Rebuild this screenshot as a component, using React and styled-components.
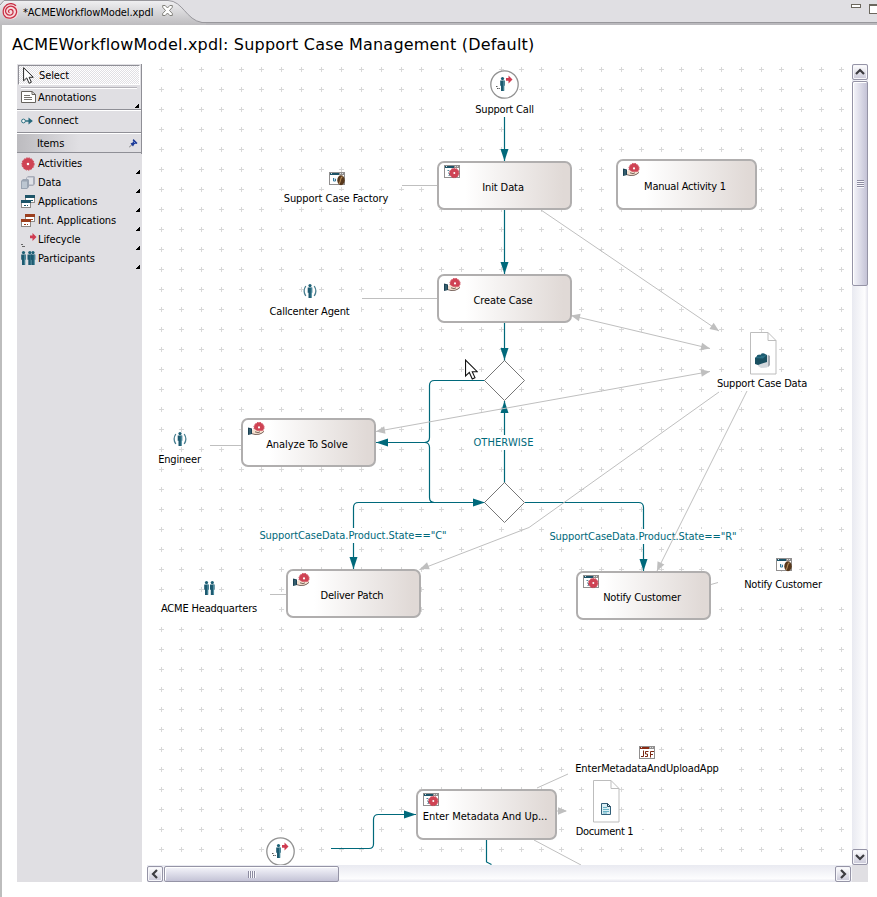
import React from "react";
import styled, { createGlobalStyle } from "styled-components";

const TEAL = "#00697b";
const GRAY = "#bfbfbf";
const CHROME = "#e0dfe3";
/* Canvas coordinates are given in window space; the viewport starts here. */
const OX = 142;
const OY = 64;

const Global = createGlobalStyle`
  * { box-sizing: border-box; }
  body { margin: 0; background: #fff; overflow: hidden; }
`;

const Window = styled.div`
  width: 877px;
  height: 897px;
  display: flex;
  flex-direction: column;
  overflow: hidden;
  background: #fff;
  color: #000;
  font: 11px/15px "DejaVu Sans Condensed", "DejaVu Sans", sans-serif;
  font-stretch: condensed;
  letter-spacing: -0.1px;
  white-space: nowrap;
`;

const TabBar = styled.header`
  height: 25px;
  flex: none;
  display: flex;
  justify-content: space-between;
  background: ${CHROME};
  border-bottom: 2px solid #bab9bd;
  box-shadow: inset 0 -1px #98979c;
`;

const Tab = styled.div`
  position: relative;
  width: 206px;
  height: 25px;
  display: flex;
  align-items: flex-start;
  padding: 3px 0 0 2px;
`;

const TabShape = styled.svg`
  position: absolute;
  left: 0;
  top: 0;
`;

const TabContent = styled.div`
  position: relative;
  display: flex;
  align-items: center;
  height: 17px;
`;

const TabName = styled.span`
  width: 131px;
  margin: 1px 8px 0 4px;
`;

const TabClose = styled.div`
  height: 13px;
  line-height: 0;
`;

const WindowButtons = styled.div`
  display: flex;
  padding: 4px 0 0;
  gap: 8px;
  width: 26px;
`;

const Minimize = styled.div`
  width: 10px;
  height: 4px;
  flex: none;
  border: 1px solid #6b675e;
  background: #fff;
`;

const Maximize = styled.div`
  width: 10px;
  height: 10px;
  flex: none;
  border: 1px solid #6b675e;
  border-top-width: 2px;
  background: #fff;
`;

const Body = styled.main`
  flex: 1;
  display: flex;
  flex-direction: column;
  border-left: 2px solid #bdbdbd;
`;

const Title = styled.h1`
  height: 39px;
  margin: 0;
  padding: 10px 0 0 10px;
  font: 400 16px/20px "DejaVu Sans", sans-serif;
  font-stretch: normal;
  letter-spacing: 0.2px;
`;

const Workspace = styled.div`
  display: flex;
  height: 818px;
  padding-left: 15px;
`;

const Palette = styled.nav`
  width: 125px;
  height: 818px;
  flex: none;
  background: ${CHROME};
`;

const PaletteTop = styled.div`
  border-right: 1px solid #8f8f96;
  height: 90px;
`;

const SelectTool = styled.div`
  height: 20px;
  margin: 0 1px 2px 1px;
  display: flex;
  align-items: center;
  padding: 0 0 0 4px;
  gap: 5px;
  border: 1px solid;
  border-color: #8f8f96 #fff #fff #8f8f96;
  background: repeating-conic-gradient(#fff 0 25%, ${CHROME} 0 50%) 0 0 / 2px 2px;
`;

const SelectWrap = styled.div`
  height: 24px;
  padding-top: 1px;
`;

const Rule = styled.div`
  height: 2px;
  margin: 0 4px;
  border-top: 1px solid #b5b4ba;
  background: #fff;
`;

const Tool = styled.div`
  position: relative;
  height: ${(p) => p.$h}px;
  display: flex;
  align-items: center;
  padding: 0 0 ${(p) => p.$pb || 0}px 4px;
  gap: 3px;
  border-bottom: ${(p) => (p.$line ? "1px solid #8f8f96" : "0")};
  box-shadow: ${(p) => (p.$light ? "inset 0 1px #fff" : "none")};
`;

const ToolIcon = styled.div`
  width: 14px;
  flex: none;
  line-height: 0;
  overflow: visible;
`;

const ItemsHeader = styled.div`
  height: 20px;
  display: flex;
  align-items: center;
  justify-content: space-between;
  padding: 0 3px 0 20px;
  border-top: 1px solid #fff;
  border-bottom: 1px solid #8f8f96;
  background: linear-gradient(90deg, #bcbbbf, ${CHROME} 50%);
`;

const Corner = styled.i`
  position: absolute;
  right: 2px;
  bottom: ${(p) => p.$b}px;
  width: 4px;
  height: 4px;
  background: linear-gradient(135deg, transparent 45%, #000 46%);
`;

const Text = styled.span`
  letter-spacing: ${(p) => p.$ls ?? -0.1}px;
`;

const EditorGrid = styled.div`
  display: grid;
  grid-template-columns: 710px 16px;
  grid-template-rows: 801px 17px;
`;

const Canvas = styled.section`
  position: relative;
  overflow: hidden;
  background: #fff;
`;

const Layer = styled.svg`
  position: absolute;
  left: 0;
  top: 0;
`;

const ActivityBox = styled.div`
  position: absolute;
  left: ${(p) => p.$x - OX}px;
  top: ${(p) => p.$y - OY}px;
  width: ${(p) => p.$w}px;
  height: ${(p) => p.$h}px;
  display: flex;
  align-items: center;
  justify-content: center;
  padding: 4px 3px 0 0;
  border: 2px solid #b0aeae;
  border-radius: 7px;
  background: linear-gradient(90deg, #fff 20%, #e0d9d6 95%);
`;

const ActivityIcon = styled.div`
  position: absolute;
  left: 5px;
  top: 2px;
  line-height: 0;
`;

const Caption = styled.div`
  position: absolute;
  left: ${(p) => p.$x - OX}px;
  top: ${(p) => p.$y - OY}px;
  width: ${(p) => p.$w}px;
  height: 15px;
  text-align: center;
  background: #fff;
  color: ${(p) => (p.$flow ? TEAL : "#000")};
  letter-spacing: ${(p) => p.$ls ?? -0.18}px;
`;

const Pin = styled.div`
  position: absolute;
  left: ${(p) => p.$x - OX}px;
  top: ${(p) => p.$y - OY}px;
  line-height: 0;
`;

const VScroll = styled.div`
  display: flex;
  flex-direction: column;
  background: linear-gradient(90deg, #e9eaf1, #fdfdfe 80%, #e3e3ec);
`;

const HScroll = styled.div`
  display: flex;
  margin-left: 5px;
  background: linear-gradient(#e9eaf1, #fdfdfe 80%, #e3e3ec);
`;

const ScrollCorner = styled.div`
  background: ${CHROME};
`;

const ScrollButton = styled.div`
  width: 16px;
  height: 16px;
  flex: none;
  margin: ${(p) => p.$m || "0"};
  display: flex;
  align-items: center;
  justify-content: center;
  border: 1px solid #9594a6;
  border-radius: 2px;
  box-shadow: inset 0 0 0 1px #f6f6fa;
  background: linear-gradient(#fff, #c9c8d8);
`;

const Thumb = styled.div`
  flex: none;
  width: ${(p) => p.$w}px;
  height: ${(p) => p.$h}px;
  margin: ${(p) => p.$m};
  display: flex;
  align-items: center;
  justify-content: center;
  border: 1px solid #9594a6;
  border-radius: 2px;
  box-shadow: inset 1px 1px #fff;
  background: linear-gradient(${(p) => p.$dir}, #f5f5fa, #e4e4ee 35%, #c4c3d6);
`;

const Grip = styled.div`
  width: ${(p) => (p.$vertical ? 7 : 8)}px;
  height: ${(p) => (p.$vertical ? 8 : 7)}px;
  background: repeating-linear-gradient(
    ${(p) => (p.$vertical ? "180deg" : "90deg")},
    #8c8ba0 0 1px,
    #f8f8fc 1px 2px
  );
`;

/* ---- icons ---- */
const Svg = ({ w = 16, h = 16, children, ...rest }) => (
  <svg width={w} height={h} viewBox={`0 0 ${w} ${h}`} {...rest}>
    {children}
  </svg>
);

const GearShape = ({ cx, cy, r }) => (
  <g>
    <circle cx={cx} cy={cy} r={r - 0.4} fill="#cf4354" />
    <circle cx={cx} cy={cy} r={r - 0.3} fill="none" stroke="#cb3f50" strokeWidth="1" strokeDasharray="1.6 1" />
    <circle cx={cx} cy={cy} r={r * 0.2} fill="#fff" />
  </g>
);

const GearIcon = () => (
  <Svg h={14} w={14}><GearShape cx={7} cy={7} r={6.4} /></Svg>
);

const WindowArt = ({ color = "#1d5468" }) => (
  <g shapeRendering="crispEdges">
    <rect x="0" y="0" width="16" height="13" fill="#918f8f" />
    <rect x="1" y="3" width="14" height="9" fill="#fff" />
    <rect x="1" y="1" width="9" height="2" fill={color} />
    <rect x="11" y="1" width="1" height="1" fill="#ddd" />
    <rect x="13" y="1" width="1" height="1" fill="#ddd" />
    <rect x="2" y="1" width="1" height="1" fill="#d4e1e6" />
  </g>
);

const AppGearIcon = () => (
  <Svg h={14}>
    <WindowArt />
    <path d="M3.500 5.500h1.500l1 1M4 8h1.500v2.500h-1" stroke="#4f8397" fill="none" />
    <GearShape cx={10.3} cy={8} r={5} />
  </Svg>
);

const AppBeanIcon = () => (
  <Svg h={14}>
    <WindowArt />
    <path d="M4.500 6v3h2v-2h-1" stroke="#33789a" fill="none" />
    <ellipse cx="12" cy="8.300" rx="3.700" ry="5" fill="#57381c" />
    <path d="M13.500 4.500c-3 2-1 4-3.500 7.500" stroke="#b78c59" fill="none" strokeWidth="1.100" />
  </Svg>
);

const JsfIcon = () => (
  <Svg h={13}>
    <WindowArt color="#8a2a12" />
    <path
      d="M4.500 4.500v6H2M9.500 5.500H6.500V8h2v2.500H6M11.500 11.500V5.500H15M11.500 8.500H14"
      stroke="#7a2812"
      fill="none"
    />
  </Svg>
);

const HandGearIcon = () => (
  <Svg h={14} w={17}>
    <GearShape cx={11} cy={5.4} r={5.3} />
    <path d="M0 5.500l4 1v5.500L0 13z" fill="#1c4152" />
    <path d="M2 7v5" stroke="#4d7a8b" />
    <path d="M4 8l2.500-1 2.500 1.800h6.500l.8.700-2.800 2.300-4 .9-3-.4L4 11.500z" fill="#f6dfce" />
    <path d="M4 11.700l3 .8 4-.2 3-1.300 2-1.700M7 9.800l3 .8 2-.8" stroke="#5a4640" fill="none" strokeWidth=".8" />
  </Svg>
);

const Person = ({ x = 0 }) => (
  <g transform={`translate(${x} 0)`}>
    <circle cx="2.500" cy="1.600" r="1.600" fill="#1d6176" />
    <path d="M.2 3.600h4.600v5.200H4.100V14H1V8.800H.2z" fill="#1d5a70" />
    <path d="M3.800 3.700v10" stroke="#5b9bab" strokeWidth=".9" />
  </g>
);

const PersonsIcon = () => (
  <Svg w={12} h={14}><Person x={0} /><Person x={5.8} /></Svg>
);

const ParticipantsIcon = () => (
  <Svg w={15} h={15}><Person x={0} /><Person x={6.3} /><Person x={9.5} /></Svg>
);

const RoleIcon = () => (
  <Svg w={14} h={14}>
    <Person x={4.5} />
    <path d="M2.800 2C.8 5 .8 9 2.800 12M11.200 2c2 3 2 7 0 10" stroke="#4a7f90" fill="none" strokeWidth="1.300" />
  </Svg>
);

const RedArrow = ({ x, y }) => (
  <path transform={`translate(${x} ${y})`} d="M0 2.500h2.500V0L6.500 4 2.500 8V5.300H0z" fill="#cf3b50" />
);

const StartIcon = () => (
  <Svg w={29} h={29}>
    <circle cx="14.500" cy="14.500" r="13.700" fill="#fff" stroke="#929292" strokeWidth="1.300" />
    <g transform="translate(10 7)"><Person /></g>
    <RedArrow x={16} y={5.5} />
    <path d="M6 16.500h2M7 18.500h3" stroke="#555" strokeDasharray="1.5 .7" />
  </Svg>
);

const LifecycleIcon = () => (
  <Svg w={16} h={14}>
    <RedArrow x={9} y={0} />
    <path d="M0 11.500h2M1 13.500h3" stroke="#666" />
  </Svg>
);

const AppsIcon = ({ color = "#1d5468" }) => (
  <Svg w={14} h={13} shapeRendering="crispEdges">
    <rect x="4.500" y=".5" width="9" height="7" fill="#fff" stroke="#8d8986" />
    <rect x="4" y="0" width="10" height="3" fill={color} />
    <path d="M8 5.500h1m1 0h2" stroke={color} />
    <rect x=".5" y="5.500" width="9" height="7" fill="#fff" stroke="#8d8986" />
    <rect x="0" y="5" width="10" height="3" fill={color} />
    <path d="M3 10.500h2m1 0h1" stroke={color} />
  </Svg>
);

const DataIcon = () => (
  <Svg w={14} h={13}>
    <path d="M5 2l2-2h6l1 1v7l-2 2H5z" fill="#a9adb9" />
    <path d="M6 1.500h6v7H6z" fill="#dfe1e7" />
    <path d="M0 5l2-2h5l1 1v7l-2 2H0z" fill="#9aa4b2" />
    <path d="M1 5.500h5v6.500H1z" fill="#bcc6d1" />
  </Svg>
);

const NoteIcon = () => (
  <Svg w={15} h={12}>
    <path d="M.5.500h10.500l3.500 3v8H.5z" fill="#fff" stroke="#66635e" />
    <path d="M11 .5v3h3.500" fill="none" stroke="#66635e" />
    <path d="M3 4.500h6M3 6.500h8M3 8.500h8" stroke="#76736e" />
  </Svg>
);

const ConnectIcon = () => (
  <Svg w={12} h={8}>
    <circle cx="2.500" cy="4" r="1.900" fill="#f4f6f7" stroke="#2f7283" />
    <path d="M4.500 4h6" stroke="#2f7283" strokeWidth="1.500" />
    <path d="M7.500.5L11.800 4 7.500 7.500z" fill="#27697d" />
  </Svg>
);

const PinIcon = () => (
  <Svg w={9} h={9}>
    <path d="M0 8.500L3.500 5" stroke="#777" />
    <path d="M4.500 0L8.500 4 7.500 5 5.500 5 4 7.500 1.500 4.500 4 3.200 3.800 1z" fill="#1c3a96" />
    <path d="M4.500 2.500l2 2" stroke="#7795dd" />
  </Svg>
);

const ArrowCursor = ({ w = 12, h = 19 }) => (
  <svg width={w} height={h} viewBox="0 0 12 19">
    <path d="M.5.800V15.500L4 12.200 6.700 18.200 9.200 17 6.700 11.500H11.300z" fill="#fff" stroke="#111" />
  </svg>
);

const SpiralIcon = () => (
  <Svg w={17} h={17}>
    <circle cx="8.500" cy="8.500" r="8" fill="#f7d9dc" />
    <path
      d="M7.600 9.600c-1.800-.4-1.300-3 .9-3.100 3-.1 3.600 4.300.6 5.400-4.600 1.500-7.100-3.800-4.300-6.900 4-4 10.600-.6 9.700 4.700-1.200 6.200-9.800 7.400-12.600 2.300C.3 8.500 1.600 4 4.600 1.900 8.500-.3 12 .9 14 2.800"
      fill="none"
      stroke="#c72e43"
      strokeWidth="1.250"
    />
  </Svg>
);

const CloseIcon = () => (
  <Svg w={11} h={11}>
    <path
      d="M.7.500h2.500L5.500 3 7.800.5h2.500v1.800L7.500 5.500l2.800 3v2H7.800L5.500 8 3.200 10.500H.7v-2l2.800-3L.7 2.300z"
      fill="#fff"
      stroke="#77766f"
      strokeWidth=".9"
    />
  </Svg>
);

const DocumentIcon = ({ kind }) => (
  <Svg w={27} h={43}>
    <path d="M.5.500h17.500l8 8v33.500H.5z" fill="#fff" stroke="#bdbdbd" />
    <path d="M18 .5v8h8" fill="none" stroke="#bdbdbd" />
    {kind === "data" ? (
      <g>
        <path d="M8 27l8-4 4 1v9l-3 2.500-6 .5-3-2z" fill="#d3d8dd" />
        <path d="M18 23l2 1v9l-2 2z" fill="#a4a9b0" />
        <path d="M5 26l3-3 7-1 2 1v7l-5 1.500-4 1.500-3-1z" fill="#194f60" />
        <path d="M5 26l3-2 9-1-4 3.500z" fill="#2b7085" />
        <ellipse cx="9" cy="24" rx="2" ry="1.200" fill="#1b5b70" />
        <ellipse cx="13" cy="22.500" rx="2" ry="1.200" fill="#1b5b70" />
      </g>
    ) : (
      <g>
        <path d="M8.500 23.500h6l3 3v8h-9z" fill="#d9eef4" stroke="#315e78" />
        <path d="M14.500 23.500v3h3" stroke="#203f55" fill="none" />
        <path d="M10 27.500h4M10 29.500h6M10 31.500h6M10 33h4" stroke="#5caac0" strokeWidth=".9" />
      </g>
    )}
  </Svg>
);

const Chevron = ({ d }) => (
  <Svg w={10} h={10}>
    <path d={d} fill="none" stroke="#3c3c40" strokeWidth="2.200" />
  </Svg>
);

/* ---- data ---- */
const activities = [
  { x: 437, y: 161, w: 135, h: 49, name: "Init Data", icon: AppGearIcon },
  { x: 616, y: 159, w: 141, h: 51, name: "Manual Activity 1", icon: HandGearIcon, ls: -0.22 },
  { x: 437, y: 274, w: 135, h: 49, name: "Create Case", icon: HandGearIcon },
  { x: 241, y: 418, w: 135, h: 49, name: "Analyze To Solve", icon: HandGearIcon, ls: -0.05 },
  { x: 286, y: 569, w: 135, h: 49, name: "Deliver Patch", icon: HandGearIcon, ls: -0.2 },
  { x: 576, y: 571, w: 135, h: 49, name: "Notify Customer", icon: AppGearIcon, ls: -0.18 },
  { x: 416, y: 789, w: 141, h: 51, name: "Enter Metadata And Up...", icon: AppGearIcon, ls: -0.02 },
];

const captions = [
  { x: 453, y: 102, w: 103, t: "Support Call" },
  { x: 270, y: 191, w: 132, t: "Support Case Factory", ls: -0.05 },
  { x: 258, y: 304, w: 103, t: "Callcenter Agent" },
  { x: 149, y: 452, w: 61, t: "Engineer" },
  { x: 711, y: 376, w: 102, t: "Support Case Data" },
  { x: 148, y: 601, w: 122, t: "ACME Headquarters" },
  { x: 717, y: 577, w: 132, t: "Notify Customer" },
  { x: 567, y: 761, w: 160, t: "EnterMetadataAndUploadApp", ls: -0.13 },
  { x: 567, y: 824, w: 75, t: "Document 1", ls: -0.3 },
];

const conditions = [
  { x: 473, y: 435, w: 61, t: "OTHERWISE", ls: 0.1 },
  { x: 259, y: 528, w: 188, t: 'SupportCaseData.Product.State=="C"', ls: -0.07 },
  { x: 549, y: 529, w: 188, t: 'SupportCaseData.Product.State=="R"', ls: -0.07 },
];

const pins = [
  { x: 490, y: 70, icon: StartIcon },
  { x: 266, y: 837, icon: StartIcon },
  { x: 329, y: 172, icon: AppBeanIcon },
  { x: 776, y: 558, icon: AppBeanIcon },
  { x: 303, y: 284, icon: RoleIcon },
  { x: 173, y: 432, icon: RoleIcon },
  { x: 204, y: 581, icon: PersonsIcon },
  { x: 639, y: 746, icon: JsfIcon },
];

const items = [
  ["Activities", GearIcon],
  ["Data", DataIcon],
  ["Applications", AppsIcon],
  ["Int. Applications", () => <AppsIcon color="#9c3f1f" />],
  ["Lifecycle", LifecycleIcon],
  ["Participants", ParticipantsIcon],
];

const dataLinks = [
  "M402 185.500H437",
  "M362 298.500H437",
  "M210 445.500H241",
  "M270 594.500H286",
  "M711 584.500L718 582.500",
  "M541 210L719 331",
  "M571 315.500L710 348.500",
  "M376 431.500L710 371.500",
  "M719 392L529 527.500L420 569.500",
  "M747 391L657 571",
  "M537 788L568 774",
  "M534 840L581 865",
  "M557 811H566",
];

const flows = [
  "M504.500 117V161",
  "M504.500 210V274",
  "M504.500 323V361",
  "M485 380.500H434.500Q429.500 380.500 429.500 385.500V437.500Q429.500 442.500 424.500 442.500H376",
  "M504.500 483V401",
  "M429.500 447V497.500Q429.500 502.500 434.500 502.500H485",
  "M429.500 447.500Q429.500 442.500 424.500 442.500",
  "M485 502.500H358.500Q353.500 502.500 353.500 507.500V569",
  "M525 502.500H638.500Q643.500 502.500 643.500 507.500V571",
  "M331 848.500H369Q373.500 848.500 373.500 844V819.500Q373.500 814.500 378.500 814.500H416",
  "M486.500 840V862L491.500 864.500",
];

/* x and y of the tip, rotation in degrees */
const flowHeads = [
  [504.5, 161, 90], [504.5, 274, 90], [504.5, 360, 90], [376, 442.5, 180],
  [504.5, 401, -90], [485, 502.5, 0], [353.5, 569, 90], [643.5, 571, 90], [416, 814.5, 0],
];
const dataHeads = [
  [719, 331, 34], [571, 315.5, 193], [710, 348.5, 13], [376, 431.5, 170],
  [710, 371.5, -10], [420, 569, 159], [657, 571, 116], [567, 811, 0],
];

const gridPoints = [];
for (let y = 69; y <= 849; y += 20) {
  for (let x = 161; x <= 841; x += 20) gridPoints.push(`M${x - 2} ${y + 0.5}h5M${x + 0.5} ${y - 2}v5`);
}

const CanvasLayer = ({ children }) => (
  <Layer width="710" height="801" viewBox={`${OX} ${OY} 710 801`}>
    {children}
  </Layer>
);

export default function App() {
  return (
    <Window>
      <Global />
      <TabBar>
        <Tab>
          <TabShape width="210" height="25">
            <defs>
              <linearGradient id="tab" x2="0" y2="1">
                <stop offset="0" stopColor="#f0f0f2" />
                <stop offset="1" stopColor="#bdbcbf" />
              </linearGradient>
            </defs>
            <path d="M0 5L4 .5H168C183 1 186 20 202 22.500H206V25H0z" fill="url(#tab)" />
            <path d="M0 5L4 .5H168C183 1 186 20 202 22.500H210" fill="none" stroke="#98979c" />
          </TabShape>
          <TabContent>
            <SpiralIcon />
            <TabName>*ACMEWorkflowModel.xpdl</TabName>
            <TabClose><CloseIcon /></TabClose>
          </TabContent>
        </Tab>
        <WindowButtons>
          <Minimize />
          <Maximize />
        </WindowButtons>
      </TabBar>
      <Body>
        <Title>ACMEWorkflowModel.xpdl: Support Case Management (Default)</Title>
        <Workspace>
          <Palette>
            <PaletteTop>
              <SelectWrap>
                <SelectTool>
                  <ArrowCursor w={11} h={17} />
                  <Text>Select</Text>
                </SelectTool>
                <Rule />
              </SelectWrap>
              <Tool $h={22} $pb={3} $line>
                <ToolIcon><NoteIcon /></ToolIcon>
                <Text>Annotations</Text>
                <Corner $b={1} />
              </Tool>
              <Tool $h={23} $line $light $pb={1}>
                <ToolIcon><ConnectIcon /></ToolIcon>
                <Text>Connect</Text>
              </Tool>
              <ItemsHeader>
                <Text>Items</Text>
                <PinIcon />
              </ItemsHeader>
            </PaletteTop>
            {items.map(([name, Icon]) => (
              <Tool key={name} $h={19}>
                <ToolIcon><Icon /></ToolIcon>
                <Text>{name}</Text>
                <Corner $b={-1} />
              </Tool>
            ))}
          </Palette>
          <EditorGrid>
            <Canvas>
              <CanvasLayer>
                <path d={gridPoints.join("")} stroke="#d8d8d8" fill="none" />
              </CanvasLayer>
              {captions.map((c) => (
                <Caption key={c.t} $x={c.x} $y={c.y} $w={c.w} $ls={c.ls}>{c.t}</Caption>
              ))}
              <CanvasLayer>
                <path d={flows.join("")} stroke={TEAL} strokeWidth="1.200" fill="none" />
                {flowHeads.map(([x, y, r]) => (
                  <path key={`${x}-${y}`} transform={`translate(${x} ${y}) rotate(${r})`} d="M0 0L-12 4V-4z" fill={TEAL} />
                ))}
                <path d="M504.500 360.500l20 20-20 20-20-20zM504.500 482.500l20 20-20 20-20-20z" fill="#fff" stroke="#777" />
              </CanvasLayer>
              {conditions.map((c) => (
                <Caption key={c.t} $x={c.x} $y={c.y} $w={c.w} $ls={c.ls} $flow>{c.t}</Caption>
              ))}
              <CanvasLayer>
                <path d={dataLinks.join("")} stroke={GRAY} fill="none" />
                {dataHeads.map(([x, y, r]) => (
                  <path key={`${x}-${y}`} transform={`translate(${x} ${y}) rotate(${r})`} d="M0 0L-9 3.800V-3.800z" fill={GRAY} />
                ))}
              </CanvasLayer>
              {activities.map(({ icon: Icon, ...a }) => (
                <ActivityBox key={a.name} $x={a.x} $y={a.y} $w={a.w} $h={a.h}>
                  <ActivityIcon><Icon /></ActivityIcon>
                  <Text $ls={a.ls}>{a.name}</Text>
                </ActivityBox>
              ))}
              {pins.map(({ x, y, icon: Icon }) => (
                <Pin key={`${x}-${y}`} $x={x} $y={y}><Icon /></Pin>
              ))}
              <Pin $x={750} $y={332}><DocumentIcon kind="data" /></Pin>
              <Pin $x={593} $y={780}><DocumentIcon /></Pin>
              <Pin $x={465} $y={359}><ArrowCursor w={13} h={21} /></Pin>
            </Canvas>
            <VScroll>
              <ScrollButton><Chevron d="M1 7l4-4 4 4" /></ScrollButton>
              <Thumb $w={16} $h={205} $m="1px 0 auto" $dir="90deg"><Grip $vertical /></Thumb>
              <ScrollButton><Chevron d="M1 3l4 4 4-4" /></ScrollButton>
            </VScroll>
            <HScroll>
              <ScrollButton $m="1px 0 0"><Chevron d="M7 1L3 5l4 4" /></ScrollButton>
              <Thumb $w={175} $h={16} $m="1px auto 0 1px" $dir="180deg"><Grip /></Thumb>
              <ScrollButton $m="1px 1px 0 0"><Chevron d="M3 1l4 4-4 4" /></ScrollButton>
            </HScroll>
            <ScrollCorner />
          </EditorGrid>
        </Workspace>
      </Body>
    </Window>
  );
}
